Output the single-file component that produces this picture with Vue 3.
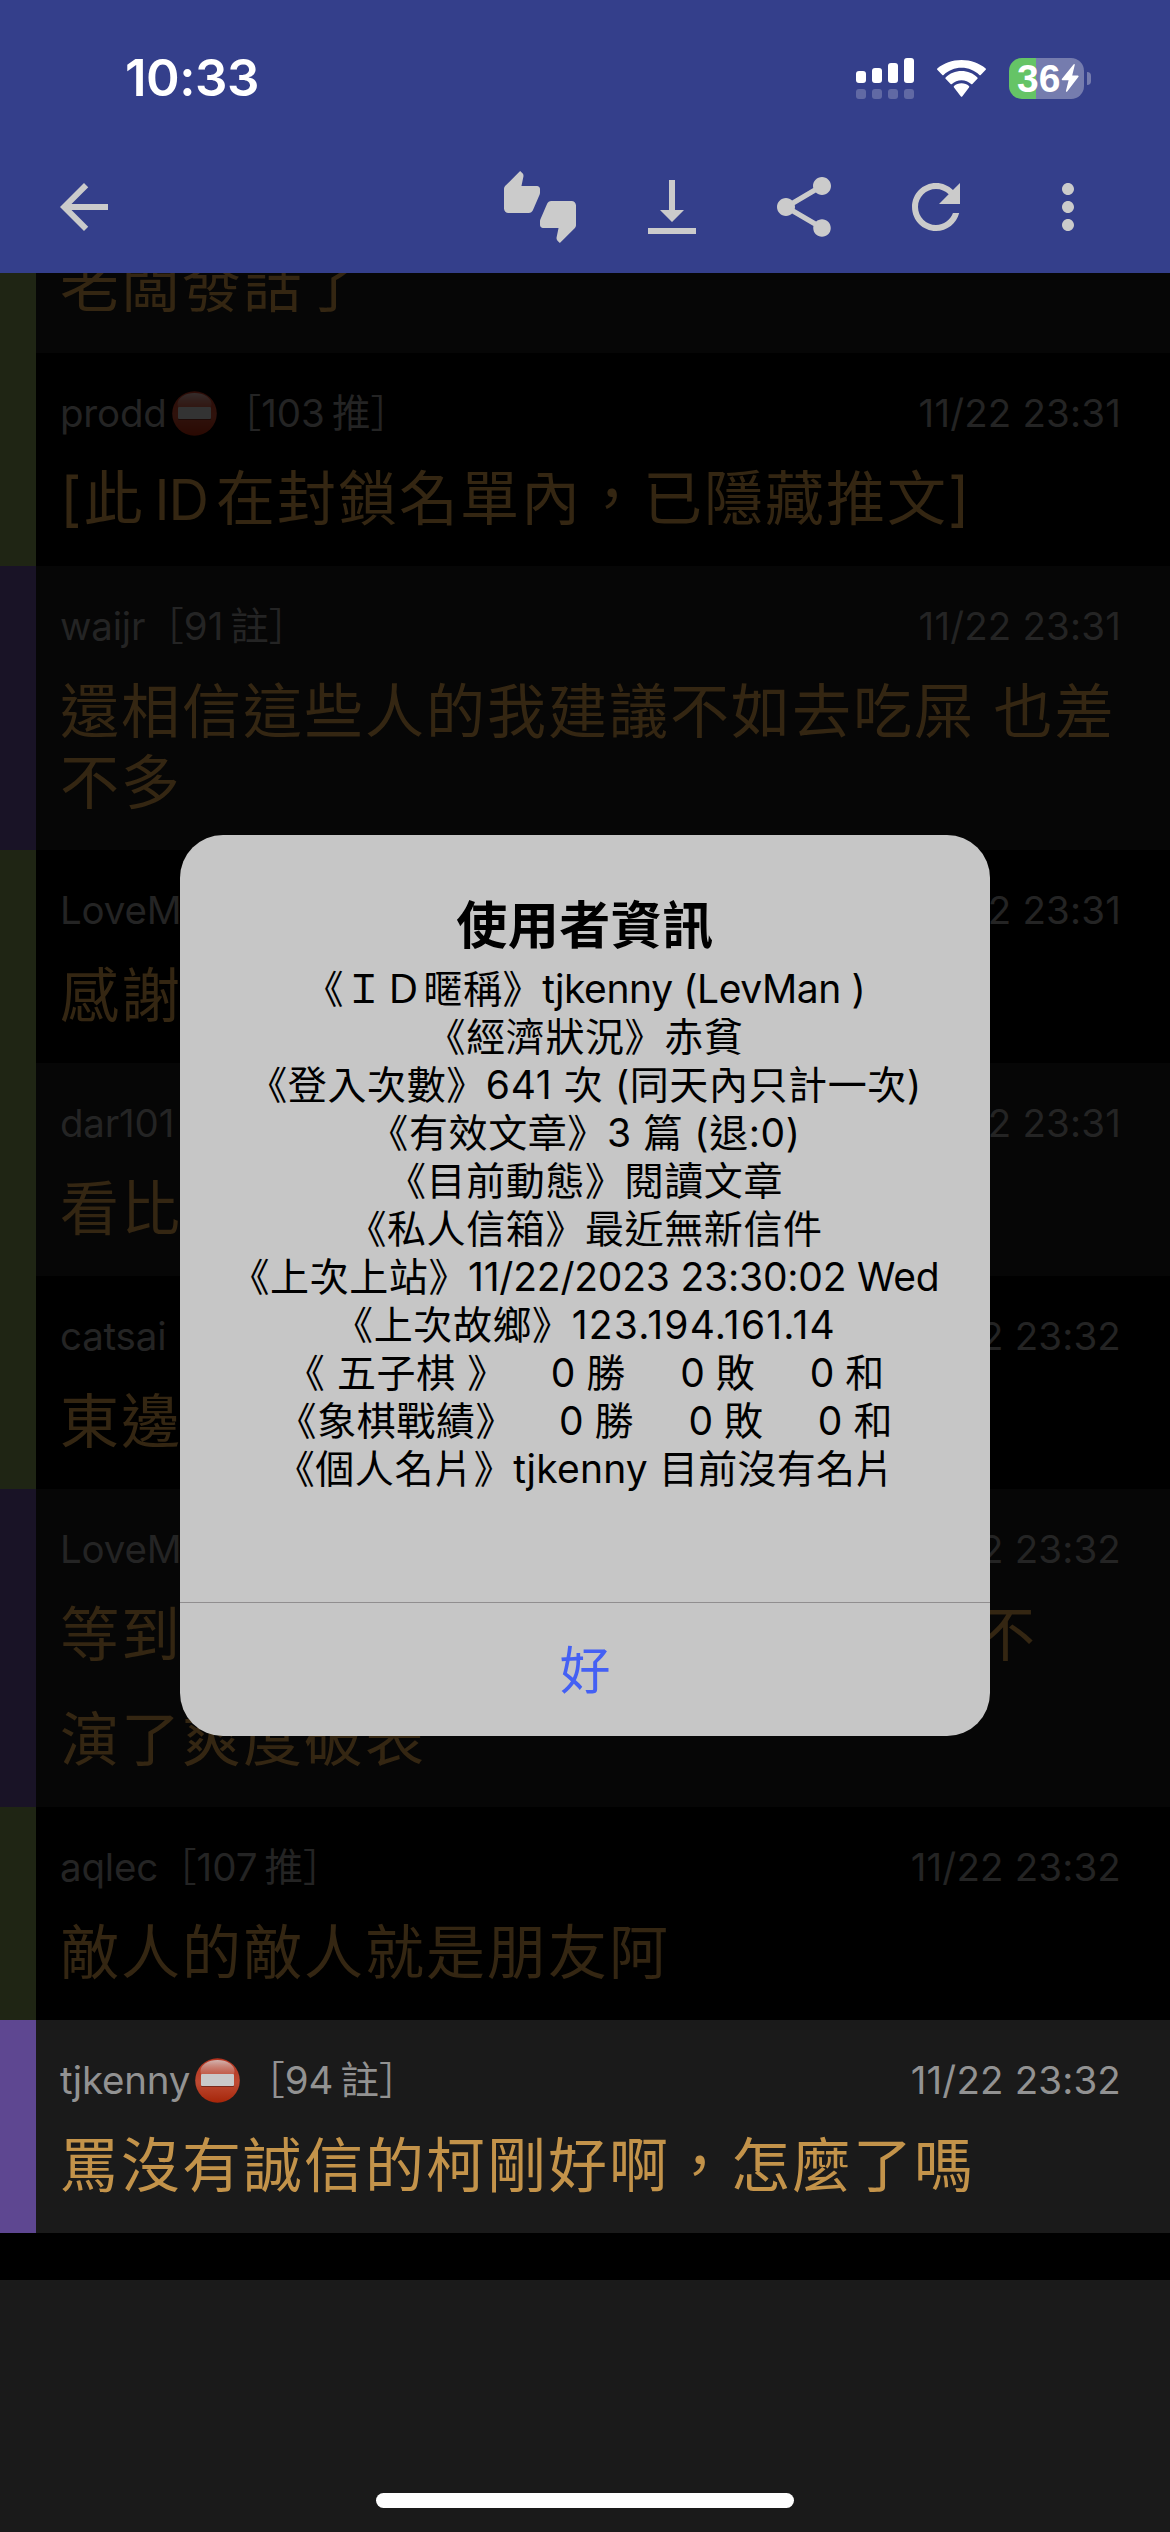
<script setup>
const icons = [
  'M12 6c0-.55-.45-1-1-1H5.82l.66-3.18.02-.23c0-.31-.13-.59-.33-.8L5.38 0 .44 4.94C.17 5.21 0 5.59 0 6v6.5c0 .83.67 1.5 1.5 1.5h6.75c.62 0 1.15-.38 1.38-.91l2.26-5.29c.07-.17.11-.36.11-.55V6zm10.5 4h-6.75c-.62 0-1.15.38-1.38.91l-2.26 5.29c-.07.17-.11.36-.11.55V18c0 .55.45 1 1 1h5.18l-.66 3.18-.02.24c0 .31.13.59.33.8l.79.78 4.94-4.94c.27-.27.44-.65.44-1.06v-6.5c0-.83-.67-1.5-1.5-1.5z',
  'M16 13h-3V3h-2v10H8l4 4 4-4zM4 19v2h16v-2H4z',
  'M18 16.08c-.76 0-1.44.3-1.96.77L8.91 12.7c.05-.23.09-.46.09-.7s-.04-.47-.09-.7l7.05-4.11c.54.5 1.25.81 2.04.81 1.66 0 3-1.34 3-3s-1.34-3-3-3-3 1.34-3 3c0 .24.04.47.09.7L8.04 9.81C7.5 9.31 6.79 9 6 9c-1.66 0-3 1.34-3 3s1.34 3 3 3c.79 0 1.5-.31 2.04-.81l7.12 4.16c-.05.21-.08.43-.08.65 0 1.61 1.31 2.92 2.92 2.92s2.92-1.31 2.92-2.92-1.31-2.92-2.92-2.92z',
  'M17.65 6.35C16.2 4.9 14.21 4 12 4c-4.42 0-7.99 3.58-7.99 8s3.57 8 7.99 8c3.73 0 6.84-2.55 7.73-6h-2.08c-.82 2.33-3.04 4-5.65 4-3.31 0-6-2.69-6-6s2.69-6 6-6c1.66 0 3.14.69 4.22 1.78L13 11h7V4l-2.35 2.35z',
  'M12 8c1.1 0 2-.9 2-2s-.9-2-2-2-2 .9-2 2 .9 2 2 2zm0 2c-1.1 0-2 .9-2 2s.9 2 2 2 2-.9 2-2-.9-2-2-2zm0 6c-1.1 0-2 .9-2 2s.9 2 2 2 2-.9 2-2-.9-2-2-2z',
]

const rows = [
  { kind: 'push', tail: true, lines: [['老闆發話了']] },
  { kind: 'push', user: 'prodd', blocked: true, floor: ['［103', '推］'], time: '11/22 23:31', lines: [['[此', 'ID', '在封鎖名單內，已隱藏推文]']] },
  { kind: 'note', user: 'waijr', floor: ['［91', '註］'], time: '11/22 23:31', lines: [['還相信這些人的我建議不如去吃屎 也差'], ['不多']] },
  { kind: 'push', user: 'LoveM', time: '11/22 23:31', lines: [['感謝']] },
  { kind: 'push', user: 'dar101', time: '11/22 23:31', lines: [['看比']] },
  { kind: 'push', user: 'catsai', time: '11/22 23:32', lines: [['東邊']] },
  { kind: 'note', user: 'LoveM', time: '11/22 23:32', loose: true, lines: [['等到', '', '不'], ['演了爽度破表']] },
  { kind: 'push', user: 'aqlec', floor: ['［107', '推］'], time: '11/22 23:32', lines: [['敵人的敵人就是朋友阿']] },
  { kind: 'note', active: true, user: 'tjkenny', blocked: true, floor: ['［94', '註］'], time: '11/22 23:32', lines: [['罵沒有誠信的柯剛好啊，怎麼了嗎']] },
]

const info = [
  { label: '《ＩＤ暱稱》', value: 'tjkenny (LevMan )', fit: 'tight' },
  { label: '《經濟狀況》', value: '赤貧' },
  { label: '《登入次數》', value: '641 次 (同天內只計一次)' },
  { label: '《有效文章》', value: '3 篇 (退:0)' },
  { label: '《目前動態》', value: '閱讀文章' },
  { label: '《私人信箱》', value: '最近無新信件' },
  { label: '《上次上站》', value: '11/22/2023 23:30:02 Wed', fit: 'snug' },
  { label: '《上次故鄉》', value: '123.194.161.14', fit: 'wide' },
  { label: '《 五子棋 》', value: '    0 勝     0 敗     0 和', fit: 'score' },
  { label: '《象棋戰績》', value: '    0 勝     0 敗     0 和', fit: 'score' },
  { label: '《個人名片》', value: 'tjkenny 目前沒有名片', fit: 'even' },
]
</script>

<template>
  <div class="screen">
    <header class="top">
      <div class="status">
        <span class="clock">10:33</span>
        <div class="indicators">
          <svg class="signal" viewBox="0 0 58 41" fill="#fff">
            <rect x="0" y="13" width="10" height="12" rx="3" />
            <rect x="16" y="10" width="10" height="15" rx="3" />
            <rect x="32" y="5" width="10" height="20" rx="3" />
            <rect x="48" y="0" width="10" height="25" rx="3" />
            <g opacity=".22">
              <rect x="0" y="31" width="10" height="10" rx="3" />
              <rect x="16" y="31" width="10" height="10" rx="3" />
              <rect x="32" y="31" width="10" height="10" rx="3" />
              <rect x="48" y="31" width="10" height="10" rx="3" />
            </g>
          </svg>
          <svg class="wifi" viewBox="0 0 51 37" fill="#fff">
            <path d="M25.500 7.700c6.900 0 13.200 2.700 17.900 7.200.4.400.9.400 1.300 0l5-5.100c.4-.4.400-1 0-1.400C43.300 3.200 34.800 0 25.500 0S7.700 3.200 1.300 8.400c-.4.400-.4 1 0 1.400l5 5.100c.4.400.9.400 1.300 0 4.700-4.500 11-7.200 17.900-7.200z" />
            <path d="M25.500 20.200c3.700 0 7 1.400 9.600 3.700.4.400.9.400 1.300 0l5-5.100c.4-.4.400-1 0-1.400-4.200-3.900-9.800-6.300-15.900-6.300s-11.700 2.400-15.900 6.300c-.4.400-.4 1 0 1.400l5 5.100c.4.400.9.400 1.300 0 2.600-2.300 5.900-3.700 9.600-3.700z" />
            <path d="M33 27.400c.4-.4.400-1 0-1.400-2-1.700-4.600-2.700-7.500-2.700s-5.500 1-7.500 2.700c-.4.400-.4 1 0 1.400l6.900 9c.4.500.9.500 1.300 0z" />
          </svg>
          <div class="battery">
            <div class="cell">
              <span class="level">36</span>
              <svg class="bolt" viewBox="0 0 18 28" fill="#fff"><path d="M12.500.4 1 14.700c-.6.800-.3 1.600.6 1.600h6L5 26.700c-.3 1.100.5 1.500 1.200.7L17.300 13c.6-.8.300-1.600-.6-1.600h-5.500l2.500-10.200c.3-1.200-.5-1.600-1.200-.8z" /></svg>
            </div>
            <i class="cap"></i>
          </div>
        </div>
      </div>
      <nav class="toolbar">
        <svg class="icon" viewBox="0 0 24 24"><path d="M20 11H7.830l5.590-5.590L12 4l-8 8 8 8 1.410-1.410L7.830 13H20v-2z" /></svg>
        <div class="actions">
          <svg v-for="(d, i) in icons" :key="i" class="icon" viewBox="0 0 24 24"><path :d="d" /></svg>
        </div>
      </nav>
    </header>

    <main class="list">
      <article v-for="(r, i) in rows" :key="i" class="row" :class="[r.kind, { tail: r.tail, active: r.active, loose: r.loose }]">
        <i class="bar"></i>
        <div class="content">
          <div v-if="!r.tail" class="meta">
            <span class="user">{{ r.user }}</span>
            <svg v-if="r.blocked" class="noentry" viewBox="0 0 45 45">
              <defs>
                <linearGradient :id="'red' + i" x1="0" y1="0" x2="0" y2="1">
                  <stop offset="0" stop-color="#b5321d" />
                  <stop offset=".55" stop-color="#bd4a32" />
                  <stop offset="1" stop-color="#a62509" />
                </linearGradient>
                <linearGradient :id="'shine' + i" x1="0" y1="0" x2="0" y2="1">
                  <stop offset="0" stop-color="#d2b5b0" />
                  <stop offset="1" stop-color="#c4523c" stop-opacity=".3" />
                </linearGradient>
              </defs>
              <circle cx="22.500" cy="22.500" r="22.300" :fill="`url(#red${i})`" />
              <ellipse cx="22.500" cy="13" rx="17" ry="11" :fill="`url(#shine${i})`" />
              <rect x="6" y="16.500" width="33" height="12.500" rx="1" fill="#792a1c" />
              <rect x="6" y="16" width="33" height="12" rx="1" fill="#c9c9c9" />
            </svg>
            <span v-for="(f, k) in r.floor" :key="k" class="floor">{{ f }}</span>
            <time>{{ r.time }}</time>
          </div>
          <div class="text">
            <p v-for="(line, n) in r.lines" :key="n"><span v-for="(part, k) in line" :key="k" :class="{ latin: k === 1 && part, gap: !part }">{{ part }}</span></p>
          </div>
        </div>
      </article>
    </main>

    <footer class="bottom"><i class="home"></i></footer>

    <section class="dialog">
      <h1>使用者資訊</h1>
      <div class="info">
        <p v-for="(line, i) in info" :key="i">{{ line.label }}<span :class="line.fit">{{ line.value }}</span></p>
      </div>
      <button>好</button>
    </section>
  </div>
</template>

<style>
body { background: #1a1a1a; }
</style>

<style scoped>
.screen {
  position: relative;
  width: 1170px;
  height: 2532px;
  display: flex;
  flex-direction: column;
  overflow: hidden;
  background: #1a1a1a;
  font-family: Inter, "Noto Sans CJK TC", sans-serif;
}
.screen * { box-sizing: border-box; }
p, h1 { margin: 0; }
svg { display: block; flex: none; }

.top { flex: none; height: 273px; background: #343f8b; display: flex; flex-direction: column; }
.status { height: 156px; padding: 0 79px 0 125px; display: flex; justify-content: space-between; align-items: center; }
.clock { color: #fff; font-size: 51px; font-weight: 600; letter-spacing: -0.5px; line-height: 60px; }
.indicators { display: flex; align-items: center; }
.signal { width: 58px; height: 41px; }
.wifi { width: 51px; height: 37px; margin-left: 22px; }
.battery { display: flex; align-items: center; margin-left: 22px; gap: 3px; }
.cell {
  width: 75px; height: 41px; border-radius: 13px; padding-left: 8px;
  display: flex; align-items: center;
  background: linear-gradient(90deg, #65c466 27px, #757cae 27px);
}
.level { width: 44px; color: #fff; font-family: "Liberation Sans", sans-serif; font-size: 39px; font-weight: 700; line-height: 41px; }
.bolt { width: 18px; height: 28px; }
.cap { width: 4px; height: 13px; border-radius: 0 5px 5px 0; background: #757cae; }
.toolbar { height: 102px; padding: 0 66px 0 48px; display: flex; align-items: center; justify-content: space-between; }
.actions { display: flex; gap: 60px; }
.icon { width: 72px; height: 72px; fill: #cbcbcb; }

.list { flex: none; height: 2007px; background: #000; }
.row { display: flex; background: #000; }
.row:nth-child(odd) { background: #060606; }
.bar { flex: none; width: 36px; background: #1f2514; }
.note .bar { background: #191326; }
.content { flex: 1; padding: 36px 49px 32px 24px; }
.meta { display: flex; align-items: center; height: 49px; margin-bottom: 25px; font-size: 38.500px; line-height: 49px; color: #242424; white-space: nowrap; }
.user { letter-spacing: -.2px; }
.noentry { width: 45px; height: 45px; margin: 0 6px 0 5px; opacity: .25; }
.floor + .floor { margin-left: 7px; }
.meta time { margin-left: auto; letter-spacing: .15px; }
.text { color: #342612; font-size: 59px; letter-spacing: 2px; line-height: 71px; white-space: pre; }
.latin { margin: 0 8px 0 10px; font-size: 56px; letter-spacing: -1px; line-height: 56px; }
.gap { display: inline-block; width: 794px; }
.tail { height: 80px; overflow: hidden; }
.tail .content { display: flex; flex-direction: column; justify-content: flex-end; padding-top: 0; }
.loose p + p { margin-top: 34px; }
.row.active { background: #1a1a1a; }
.active .bar { background: #5e4791; }
.active .meta { color: #929292; }
.active .text { color: #c3934a; }
.active .noentry { opacity: 1; }

.bottom { flex: 1; display: flex; justify-content: center; align-items: flex-end; padding-bottom: 24px; }
.home { width: 418px; height: 15px; border-radius: 8px; background: #fff; }

.dialog {
  position: absolute; left: 180px; top: 835px; width: 810px; height: 901px;
  display: flex; flex-direction: column;
  border-radius: 43px; overflow: hidden; background: #c6c6c6; color: #000;
}
h1 { margin-top: 60px; text-align: center; font-size: 51px; font-weight: 700; line-height: 62px; letter-spacing: .5px; }
.info { margin-top: 8px; font-size: 39px; line-height: 48px; letter-spacing: .6px; text-align: center; white-space: pre; }
.tight { letter-spacing: -.4px; }
.snug { letter-spacing: -.2px; }
.wide { letter-spacing: 1.2px; }
.score { letter-spacing: 0; }
.even { letter-spacing: .2px; }
button {
  margin: auto 0 0; height: 134px; border: 0; border-top: 1px solid #908e8f; padding: 2px 0 0;
  background: none; color: #4460f4; font: 400 51px/131px Inter, "Noto Sans CJK TC", sans-serif;
}
</style>
